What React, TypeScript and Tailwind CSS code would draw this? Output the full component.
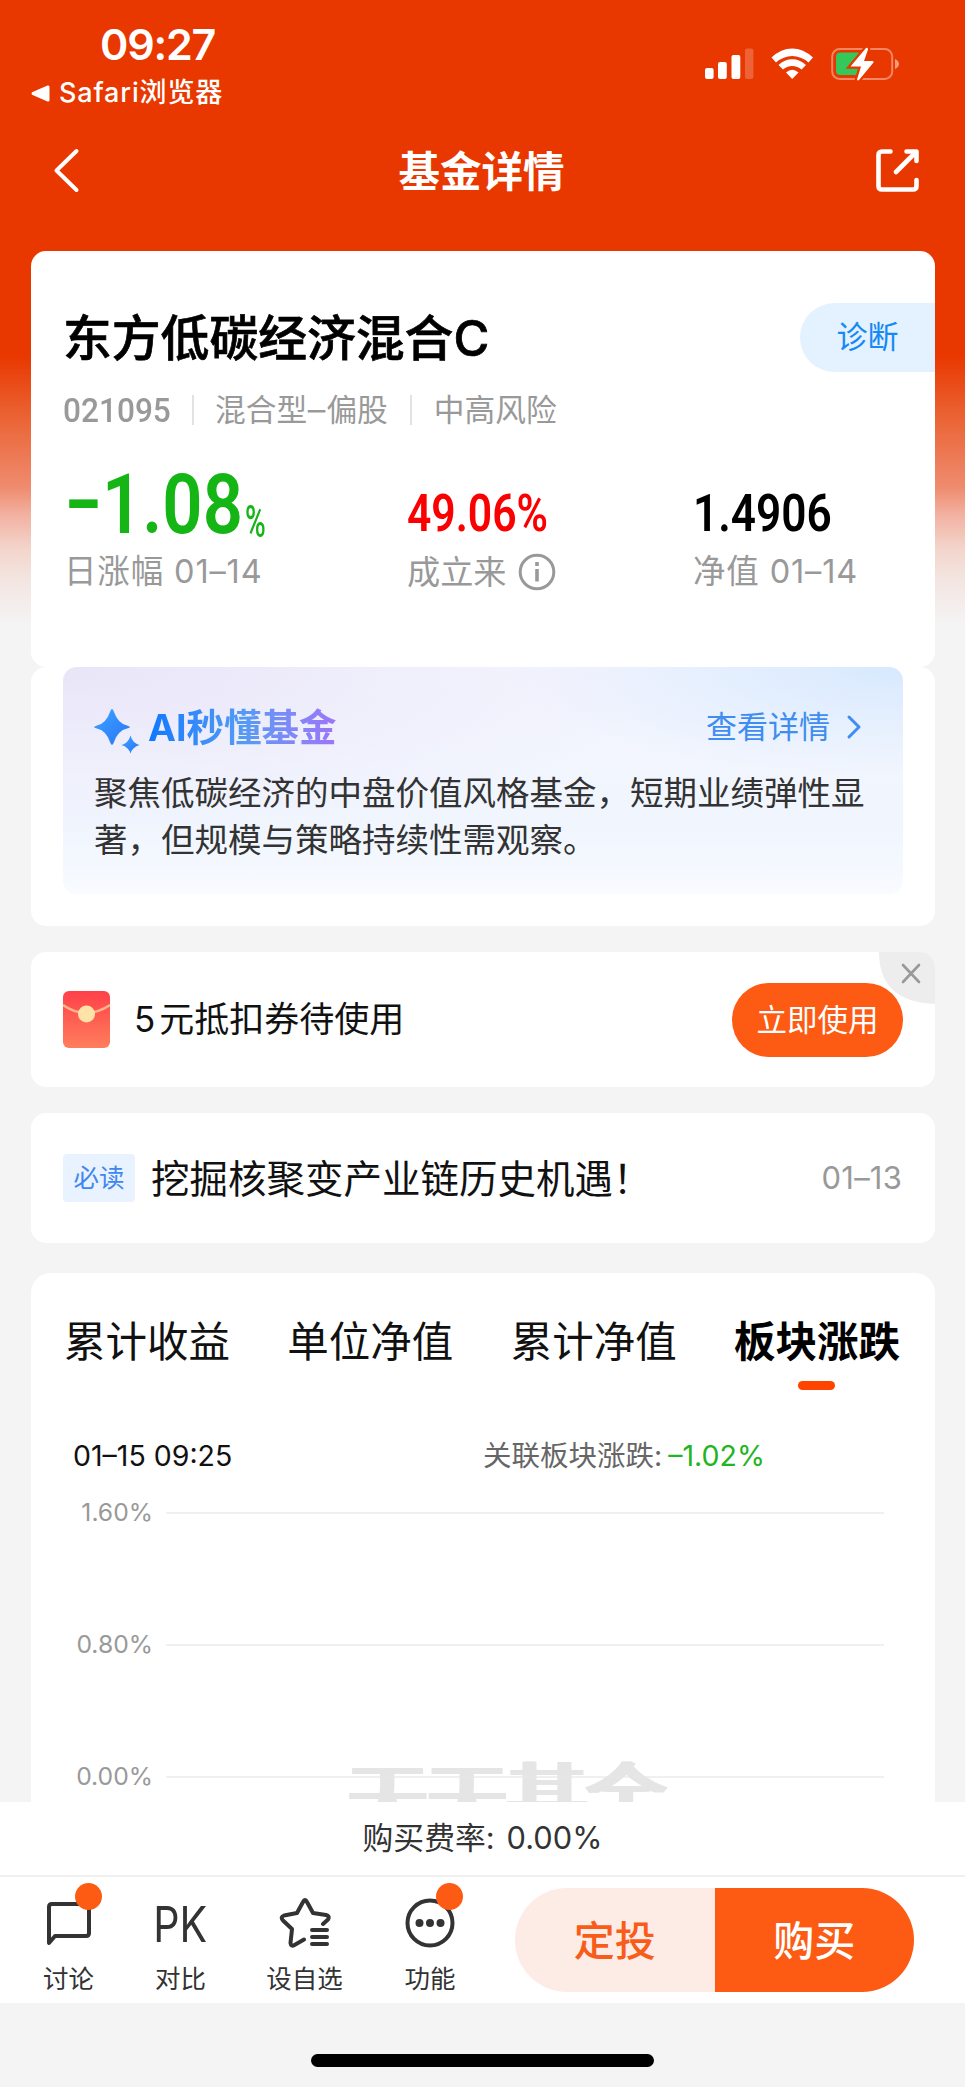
import React from "react";

type Tab = { label: string; active?: boolean };

const tabs: Tab[] = [
  { label: "累计收益" },
  { label: "单位净值" },
  { label: "累计净值" },
  { label: "板块涨跌", active: true },
];

const ticks = ["1.60%", "0.80%", "0.00%"];

const StatusIcons: React.FC = () => (
  <svg width="196" height="34" viewBox="704 47 196 34" fill="#fff">
    <rect x="705" y="68" width="8.6" height="11" rx="2" />
    <rect x="718" y="62" width="8.8" height="17" rx="2" />
    <rect x="731.5" y="55" width="8.8" height="24" rx="2" />
    <rect x="745" y="48.5" width="8.4" height="30.5" rx="2" opacity="0.22" />
    <path d="M771.5 57.500Q781 48.500 792.200 48.500T813 57.500L808.500 62.500Q801 56 792.200 56T776 62.500Z" />
    <path d="M778.500 65Q784.500 59.300 792.200 59.300T806 65L801.500 69.500Q797.500 66 792.200 66T783 69.500Z" />
    <path d="M786 72.500Q789 69.800 792.200 69.800T798.500 72.500L792.200 79Z" />
    <rect x="832.200" y="49" width="60" height="30" rx="7.500" fill="none" stroke="#fff" strokeOpacity="0.4" strokeWidth="2" />
    <rect x="836" y="52.500" width="25" height="22.500" rx="4" fill="#34c759" />
    <path d="M895 59Q899 61 899 64T895 69Z" opacity="0.5" />
    <path
      d="M866 48L850.500 66.500H861L857 79.500Q857.500 81 859 80L873.500 62.500Q874 61 872.500 61H864L868 49.500Q868 47 866 48Z"
      stroke="#e93700"
      strokeWidth="4.500"
      paintOrder="stroke"
    />
  </svg>
);

const StatusBar: React.FC = () => (
  <div className="flex h-[112px] justify-between pt-[19px] pr-[65px] pl-[31px] text-white">
    <div>
      <div className="pl-[69px] text-[43px] leading-[50px] font-semibold tracking-[-1.2px]">09:27</div>
      <div className="mt-[7px] flex h-[34px] items-center gap-[9px]">
        <svg width="19" height="17" viewBox="0 0 19 17" fill="#fff">
          <path d="M1 7.200L16.500 0.600Q18.500 0 18.500 2V15Q18.500 17 16.500 16.400L1 9.800Q0 8.500 1 7.200Z" />
        </svg>
        <span className="text-[27px] leading-[34px] font-medium tracking-[0.85px] whitespace-nowrap">Safari浏览器</span>
      </div>
    </div>
    <div className="pt-[28px]">
      <StatusIcons />
    </div>
  </div>
);

const NavBar: React.FC = () => (
  <div className="flex h-[139px] items-start justify-between pt-[35px] pr-[45px] pl-[52px] text-white">
    <svg width="29" height="46" viewBox="0 0 29 46" fill="none" stroke="#fff" strokeWidth="4" strokeLinecap="round" strokeLinejoin="round">
      <path d="M24.500 4L4.500 23.500L24.500 43" />
    </svg>
    <h1 className="pt-px pl-[7px] text-[41.500px] leading-[48px] font-bold">基金详情</h1>
    <svg width="45" height="45" viewBox="0 0 45 45" fill="none" stroke="#fff" strokeWidth="4.600" strokeLinecap="round" strokeLinejoin="round">
      <path d="M15.500 4.500H7Q3.500 4.500 3.500 8V39Q3.500 42.500 7 42.500H38Q41.500 42.500 41.500 39V33" />
      <path d="M31.500 4.500H41.500V14" />
      <path d="M39.500 6.500L21 25" />
    </svg>
  </div>
);

const FundCard: React.FC = () => (
  <section className="h-[416px] rounded-[15px] bg-white pt-[51px] pl-[32px]">
    <div className="flex items-center justify-between">
      <h2 className="pt-[2px] text-[48.800px] leading-[69px] font-medium whitespace-nowrap text-black [-webkit-text-stroke:0.700px_black]">
        东方低碳经济混合C
      </h2>
      <button className="h-[69px] w-[135px] rounded-l-full bg-[#e4f2ff] pb-px text-[31px] text-[#1689f5]">诊断</button>
    </div>
    <div className="mt-[16px] flex h-[42px] items-center text-[30.700px] text-[#999]">
      <span className="w-[108px] font-[Roboto] text-[34px] font-medium">
        <span className="inline-block origin-left scale-x-[0.93]">021095</span>
      </span>
      <span className="mx-[21px] h-[30px] w-[2px] bg-[#e2e2e2]" />
      <span className="whitespace-nowrap">
        混合型<span className="mx-[2px] inline-block scale-x-[1.15]">–</span>偏股
      </span>
      <span className="mx-[22px] h-[30px] w-[2px] bg-[#e2e2e2]" />
      <span className="whitespace-nowrap">中高风险</span>
    </div>
    <div className="mt-[32px] flex">
      <div className="w-[344px] pl-px">
        <div className="flex h-[84px] items-baseline font-[Roboto] text-[#16b516]">
          <span className="flex w-[181px] text-[83px] leading-[84px] font-semibold">
            <span className="w-[38px] pl-px">
              <span className="inline-block origin-left scale-x-[0.68]">–</span>
            </span>
            <span className="inline-block origin-left scale-x-[0.85] whitespace-nowrap">1.08</span>
          </span>
          <span className="relative top-[4px] text-[44px] font-medium">
            <span className="inline-block origin-left scale-x-[0.64]">%</span>
          </span>
        </div>
        <div className="mt-[4px] text-[32.500px] leading-[42px] tracking-[0.850px] text-[#999]">日涨幅 01–14</div>
      </div>
      <div className="w-[286px]">
        <div className="h-[84px] pt-[15px] font-[Roboto] text-[52px] leading-[72px] font-semibold text-[#fb0000]">
          <span className="inline-block origin-left scale-x-[0.82]">49.06%</span>
        </div>
        <div className="mt-[4px] flex items-center gap-[11px] text-[33.200px] leading-[42px] text-[#999]">
          成立来
          <svg width="38" height="38" viewBox="0 0 38 38" fill="none" stroke="#999" strokeWidth="3">
            <circle cx="19" cy="19" r="16.800" />
            <path d="M19 16V28.500" strokeWidth="3.600" />
            <path d="M19 9V13" strokeWidth="3.600" />
          </svg>
        </div>
      </div>
      <div>
        <div className="h-[84px] pt-[15px] font-[Roboto] text-[52px] leading-[72px] font-semibold text-black">
          <span className="inline-block origin-left scale-x-[0.85]">1.4906</span>
        </div>
        <div className="mt-[4px] text-[32.500px] leading-[42px] tracking-[0.850px] text-[#999]">净值 01–14</div>
      </div>
    </div>
  </section>
);

const AiCard: React.FC = () => (
  <section className="h-[259px] rounded-[15px] bg-white px-[32px]">
    <div className="h-[227px] rounded-[14px] bg-[radial-gradient(ellipse_at_0%_0%,#e9e5f8_0%,#eceafa99_28%,transparent_52%),radial-gradient(ellipse_at_100%_0%,#d7e9fe_0%,transparent_34%),linear-gradient(#f5f6fe,#f0f5fe_70%,#f8fbff)] pt-[36px] pr-[41px] pl-[30px]">
      <div className="flex h-[50px] items-center justify-between">
        <div className="flex items-center">
          <svg width="47" height="46" viewBox="93 708 47 46" className="mt-[6px]">
            <defs>
              <linearGradient id="spark" x1="0" y1="0" x2="1" y2="1">
                <stop offset="0" stopColor="#3aa4ff" />
                <stop offset="1" stopColor="#2b74f8" />
              </linearGradient>
            </defs>
            <path
              d="M112 709Q113 709 114 712Q118 723.500 127 725.500Q130 726.500 130 727T127 728.500Q118 730.500 114 742Q113 745 112 745T110 742Q106 730.500 97 728.500Q94 727.500 94 727T97 725.500Q106 723.500 110 712Q111 709 112 709Z"
              fill="url(#spark)"
            />
            <path d="M130.500 735.500Q132.500 743 139.500 745Q132.500 747 130.500 753.500Q128.500 747 121.500 745Q128.500 743 130.500 735.500Z" fill="url(#spark)" />
          </svg>
          <span className="ml-[8px] bg-linear-to-r from-[#0a78ff] via-[#529bf4] to-[#9b74fa] bg-clip-text text-[37.500px] leading-[50px] font-bold text-transparent">
            AI秒懂基金
          </span>
        </div>
        <div className="flex items-center gap-[16px] pb-[2px] text-[31px] text-[#3f8df0]">
          查看详情
          <svg width="16" height="26" viewBox="0 0 16 26" fill="none" stroke="#3f8df0" strokeWidth="3" strokeLinecap="round" strokeLinejoin="round">
            <path d="M3 3L13 13L3 23" />
          </svg>
        </div>
      </div>
      <p className="mt-[17px] ml-px text-[33.500px] leading-[47px] whitespace-nowrap text-[#333]">
        聚焦低碳经济的中盘价值风格基金，短期业绩弹性显
        <br />
        著，但规模与策略持续性需观察。
      </p>
    </div>
  </section>
);

const CouponCard: React.FC = () => (
  <section className="relative mt-[26px] flex h-[135px] items-center overflow-hidden rounded-[15px] bg-white pr-[32px] pl-[32px]">
    <svg width="47" height="57" viewBox="0 0 47 57">
      <defs>
        <linearGradient id="env" x1="0" y1="0" x2="0" y2="1">
          <stop offset="0" stopColor="#ff4049" />
          <stop offset="1" stopColor="#ff7e5c" />
        </linearGradient>
      </defs>
      <rect width="47" height="57" rx="6" fill="url(#env)" />
      <path d="M0 14Q23 30 47 14" fill="none" stroke="#ffb489" strokeWidth="2.400" />
      <circle cx="23.500" cy="23" r="8.500" fill="#ffe2a8" />
    </svg>
    <span className="ml-[24px] text-[35px] text-[#111]">
      <span className="mr-[4px]">5</span>元抵扣券待使用
    </span>
    <button className="ml-auto h-[74px] w-[171px] rounded-full bg-[#fd5a13] text-[30.500px] text-white">立即使用</button>
    <svg className="absolute top-0 right-0" width="56" height="52" viewBox="0 0 56 52">
      <path d="M0 0H56V52Q0 50 0 0Z" fill="#ededed" />
      <path d="M24 13L40 30M40 13L24 30" stroke="#999" strokeWidth="2.600" strokeLinecap="round" />
    </svg>
  </section>
);

const NewsCard: React.FC = () => (
  <section className="mt-[26px] flex h-[130px] items-center rounded-[15px] bg-white pr-[33px] pl-[32px]">
    <span className="flex h-[48px] w-[72px] items-center justify-center rounded-[4px] bg-[#e9f2ff] text-[25.500px] text-[#3f87ef]">必读</span>
    <span className="ml-[16px] pt-[3px] text-[38.500px] whitespace-nowrap text-[#111]">挖掘核聚变产业链历史机遇！</span>
    <span className="ml-auto pt-px text-[31px] tracking-[0.200px] text-[#999]">01–13</span>
  </section>
);

const ChartCard: React.FC = () => (
  <section className="mt-[30px] h-[529px] overflow-hidden rounded-t-[20px] bg-white">
    <div className="flex justify-between pt-[39px] pr-[35px] pl-[33px] text-[41.500px] leading-[60px] text-[#111]">
      {tabs.map((t) => (
        <div key={t.label} className={t.active ? "font-bold text-black" : ""}>
          {t.label}
          {t.active && <div className="mx-auto mt-[9px] h-[9px] w-[37px] rounded-full bg-[#ff4400]" />}
        </div>
      ))}
    </div>
    <div className="mt-[46px] flex h-[40px] items-center pl-[42px] text-[28.500px]">
      <span className="w-[410px] text-[#111]">01–15 09:25</span>
      <span className="text-[#666]">关联板块涨跌:</span>
      <span className="ml-[6px] text-[#22b522]">–1.02%</span>
    </div>
    <div className="relative mt-[19px] mr-[51px] ml-[30px]">
      {/* brand watermark, the bottom half sits under the fee bar */}
      <div className="absolute top-[255px] left-[287px] text-[79.500px] leading-[100px] font-normal whitespace-nowrap text-[#e5e5e5] [text-shadow:-4px_0_#e5e5e5,-2px_0_#e5e5e5,2px_0_#e5e5e5,4px_0_#e5e5e5]">
        天天基金
      </div>
      {ticks.map((t) => (
        <div key={t} className="relative flex h-[132px] items-start gap-[13px]">
          <span className="w-[92px] text-right text-[24.700px] leading-[34px] text-[#999]">{t}</span>
          <span className="mt-[17px] h-[2px] flex-1 bg-[#e6e6e6]/60" />
        </div>
      ))}
    </div>
  </section>
);

const iconProps = {
  fill: "none",
  stroke: "#333",
  strokeWidth: 4,
  strokeLinecap: "round" as const,
  strokeLinejoin: "round" as const,
};

type ActionProps = { label: string; width: string; dot?: boolean; children: React.ReactNode };

const Action: React.FC<ActionProps> = ({ label, width, dot, children }) => (
  <div className={`relative flex flex-col items-center whitespace-nowrap ${width}`}>
    <div className="flex h-[54px] items-center justify-center">{children}</div>
    <span className="mt-[11px] text-[25.500px] leading-[36px] text-[#333]">{label}</span>
    {dot && <span className="absolute -top-[13px] left-1/2 ml-[6px] h-[27px] w-[27px] rounded-full bg-[#fd5a13]" />}
  </div>
);

const BottomBar: React.FC = () => (
  <footer>
    <div className="flex h-[73px] items-center justify-center gap-[12px] bg-white pb-px text-[30.800px] text-[#333]">
      <span>购买费率:</span>
      <span>0.00%</span>
    </div>
    <div className="flex h-[128px] justify-between border-t-2 border-[#f0f0f0] bg-white pr-[51px] pl-[43px]">
      <div className="flex pt-[19px]">
        <Action label="讨论" width="w-[51px]" dot>
          <svg width="46" height="46" viewBox="0 0 46 46" className="mt-[2px]" {...iconProps}>
            <path d="M3 42V6Q3 3 6 3H40Q43 3 43 6V32Q43 35 40 35H9Z" />
          </svg>
        </Action>
        <div className="w-[61px]" />
        <Action label="对比" width="w-[51px]">
          <span className="inline-block scale-x-[0.84] pt-[3px] text-[49px] leading-[54px] text-[#333]">PK</span>
        </Action>
        <div className="w-[60px]" />
        <Action label="设自选" width="w-[77px]">
          <svg width="52" height="50" viewBox="0 0 52 50" {...iconProps}>
            <path d="M44 26L49 21.500Q51 18 47 17L34 15L28 4Q26 0 24 4L18 15L5 17.500Q1 19 4 22.500L13 31L11.500 45Q12 49 15.500 47L25 41.500" />
            <path d="M33 32H48M33 39H48M33 46H48" />
          </svg>
        </Action>
        <div className="w-[61px]" />
        <Action label="功能" width="w-[52px]" dot>
          <svg width="50" height="50" viewBox="0 0 50 50" {...iconProps}>
            <circle cx="25" cy="25" r="22.500" />
            <g fill="#333" stroke="none">
              <circle cx="14.500" cy="25" r="4" />
              <circle cx="25" cy="25" r="4" />
              <circle cx="35.500" cy="25" r="4" />
            </g>
          </svg>
        </Action>
      </div>
      <div className="mt-[11px] flex h-[104px] w-[399px] overflow-hidden rounded-full text-[41px] font-medium">
        <button className="flex-1 bg-[#fdece5] pt-[3px] text-[#f85c1b]">定投</button>
        <button className="flex-1 bg-[#fd5a13] pt-[3px] text-white">购买</button>
      </div>
    </div>
    <div className="flex h-[84px] justify-center bg-[#f4f4f4] pt-[51px]">
      <div className="h-[13px] w-[343px] rounded-full bg-black" />
    </div>
  </footer>
);

export default function App() {
  return (
    <div className="h-[2087px] w-[965px] overflow-hidden bg-[#f4f4f4] bg-[linear-gradient(#e93700_0px,#e93700_355px,#ea6030_412px,#ef8c6f_488px,#f2b0a0_514px,#f3d5cc_549px,#f3e6e2_582px,#f4f4f4_625px)] font-['Inter','Noto_Sans_CJK_SC',sans-serif]">
      <StatusBar />
      <NavBar />
      <main className="mr-[30px] ml-[31px]">
        <FundCard />
        <AiCard />
        <CouponCard />
        <NewsCard />
        <ChartCard />
      </main>
      <BottomBar />
    </div>
  );
}
